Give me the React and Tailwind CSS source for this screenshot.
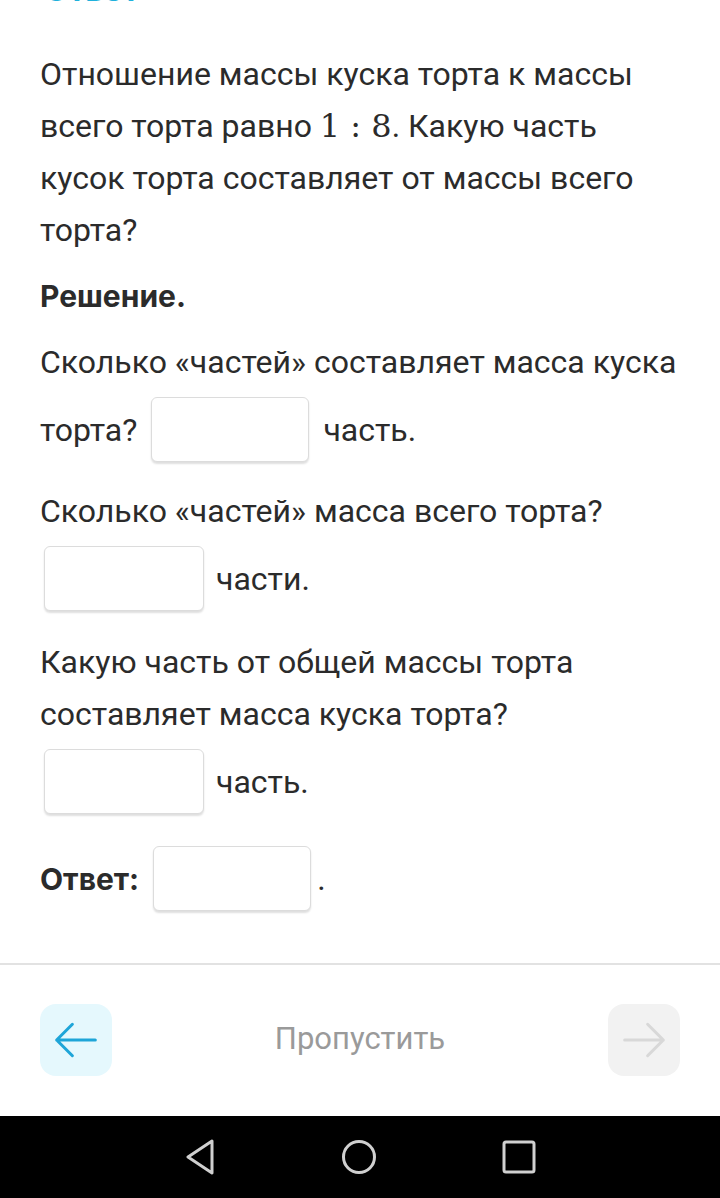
import React from "react";

// empty answer field, same look everywhere
const Field = ({ className = "" }) => (
  <div className={`w-[158px] h-[65px] shrink-0 bg-white border border-[#dcdcdc] rounded-md shadow-[0_2px_2px_rgba(0,0,0,0.13)] ${className}`} />
);

const NavBar = () => (
  <div className="h-[82px] bg-black flex items-center justify-center gap-[125px]">
    <svg width="32" height="36" viewBox="0 0 32 36" fill="none" stroke="#d0d0d0" strokeWidth="3" strokeLinejoin="round">
      <path d="M28 2 L4 18 L28 34 Z" />
    </svg>
    <svg width="36" height="36" viewBox="0 0 36 36" fill="none" stroke="#d0d0d0" strokeWidth="3">
      <circle cx="18" cy="18" r="15.5" />
    </svg>
    <svg width="34" height="34" viewBox="0 0 34 34" fill="none" stroke="#d0d0d0" strokeWidth="3">
      <rect x="2" y="2" width="30" height="30" rx="2" />
    </svg>
  </div>
);

export default function App() {
  return (
    <div className="w-[720px] h-[1198px] bg-white flex flex-col font-['Roboto','Liberation_Sans',sans-serif] text-[#2b2b2b] overflow-hidden">
      {/* heading scrolled off the top */}
      <div className="h-[6px] overflow-hidden flex items-end px-[44px]">
        <div className="text-[32px] leading-[32px] font-bold text-[#1fb1dc] font-['Inter',sans-serif]">Ответ</div>
      </div>

      <div className="flex-1 px-10 pt-[42px] text-[32px] leading-[52px]">
        <p>
          Отношение массы куска торта к массы всего торта равно{" "}
          <span className="font-['DejaVu_Serif','Liberation_Serif',serif] text-[32px]">1 : 8</span>. Какую часть
          кусок торта составляет от массы всего торта?
        </p>

        <p className="mt-[14px] font-bold font-['Inter',sans-serif] text-[30px]">Решение.</p>

        <p className="mt-[14px]">Сколько «частей» составляет масса куска</p>
        <div className="mt-[9px] flex items-center gap-[14px]">
          <span>торта?</span>
          <Field />
          <span>часть.</span>
        </div>

        <p className="mt-[23px]">Сколько «частей» масса всего торта?</p>
        <div className="mt-[9px] flex items-center gap-[12px] ml-1">
          <Field className="w-[160px]" />
          <span>части.</span>
        </div>

        <p className="mt-[25px]">Какую часть от общей массы торта составляет масса куска торта?</p>
        <div className="mt-[9px] flex items-center gap-[12px] ml-1">
          <Field className="w-[160px]" />
          <span>часть.</span>
        </div>

        <div className="mt-[32px] flex items-center gap-[14px]">
          <span className="font-bold font-['Inter',sans-serif] text-[30px]">Ответ:</span>
          <Field />
          <span className="-ml-[8px]">.</span>
        </div>
      </div>

      <div className="h-[2px] bg-[#e2e2e2]" />
      <div className="h-[151px] px-10 flex items-center justify-between pb-[2px]">
        <button className="w-[72px] h-[72px] rounded-2xl bg-[#e5f8fd] flex items-center justify-center">
          <svg width="58" height="58" viewBox="0 0 24 24" fill="none" stroke="#1ea5d8" strokeWidth="1.25" strokeLinecap="round" strokeLinejoin="round">
            <path d="M20 12H4M10.5 5.5L4 12l6.5 6.5" />
          </svg>
        </button>
        <span className="text-[31px] text-[#9a9a9a]">Пропустить</span>
        <button className="w-[72px] h-[72px] rounded-2xl bg-[#f2f2f2] flex items-center justify-center">
          <svg width="58" height="58" viewBox="0 0 24 24" fill="none" stroke="#d8d8d8" strokeWidth="1.25" strokeLinecap="round" strokeLinejoin="round">
            <path d="M4 12h16M13.5 5.5L20 12l-6.5 6.5" />
          </svg>
        </button>
      </div>
      <NavBar />
    </div>
  );
}
